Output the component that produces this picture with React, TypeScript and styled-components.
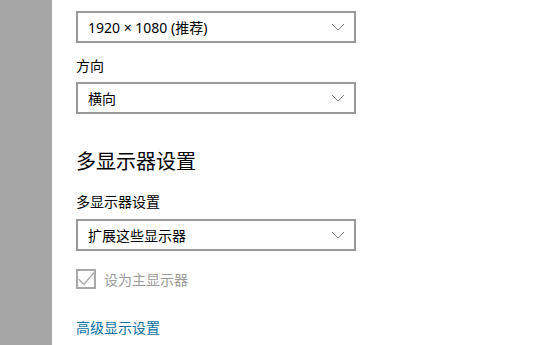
import React from "react";
import styled, { createGlobalStyle } from "styled-components";

const GlobalStyle = createGlobalStyle`
  html, body {
    margin: 0;
    padding: 0;
    background: #ffffff;
  }
  body {
    font-family: "Segoe UI", "Noto Sans", "Noto Sans CJK SC", sans-serif;
  }
`;

const Chevron = () => (
  <svg width="14" height="8" viewBox="0 0 14 8" fill="none">
    <path d="M1 1 L7 7 L13 1" stroke="#808080" strokeWidth="1" />
  </svg>
);

const Check = () => (
  <svg width="16" height="16" viewBox="0 0 16 16" fill="none">
    <path d="M0.5 8 L6 13.5 L16 1.5" stroke="#a8a8a8" strokeWidth="1.3" />
  </svg>
);

type DropdownProps = { value: string; top?: number };

const Dropdown = ({ value, top }: DropdownProps) => (
  <Select $top={top}>
    <SelectText>{value}</SelectText>
    <Chevron />
  </Select>
);

const App = () => {
  return (
    <Page>
      <GlobalStyle />
      <Sidebar />
      <Content>
        <Dropdown value="1920 × 1080 (推荐)" />
        <Label $top={13}>方向</Label>
        <Dropdown value="横向" top={6} />
        <Heading>多显示器设置</Heading>
        <Label $top={16}>多显示器设置</Label>
        <Dropdown value="扩展这些显示器" top={7} />
        <CheckRow>
          <Box>
            <Check />
          </Box>
          <CheckText>设为主显示器</CheckText>
        </CheckRow>
        <Link>高级显示设置</Link>
      </Content>
    </Page>
  );
};

export default App;

const Page = styled.div`
  display: flex;
  width: 550px;
  height: 345px;
  overflow: hidden;
  background: #ffffff;
`;

const Sidebar = styled.div`
  width: 52px;
  flex-shrink: 0;
  background: #a5a5a5;
`;

const Content = styled.div`
  display: flex;
  flex-direction: column;
  align-items: flex-start;
  padding: 11px 0 0 24px;
`;

const Select = styled.div<{ $top?: number }>`
  box-sizing: border-box;
  width: 280px;
  height: 32px;
  margin-top: ${({ $top }) => $top ?? 0}px;
  padding: 0 9px 0 10px;
  border: 2px solid #999999;
  display: flex;
  align-items: center;
  justify-content: space-between;
`;

const SelectText = styled.span`
  font-size: 14px;
  color: #000000;
`;

const Label = styled.div<{ $top: number }>`
  margin-top: ${({ $top }) => $top}px;
  font-size: 14px;
  line-height: 20px;
  color: #000000;
`;

const Heading = styled.div`
  margin-top: 34px;
  font-size: 20px;
  line-height: 28px;
  color: #000000;
`;

const CheckRow = styled.div`
  margin-top: 18px;
  display: flex;
  align-items: center;
  gap: 8px;
`;

const Box = styled.div`
  box-sizing: border-box;
  width: 20px;
  height: 20px;
  border: 2px solid #a8a8a8;
  display: flex;
  align-items: center;
  justify-content: center;
`;

const CheckText = styled.span`
  font-size: 14px;
  color: #9a9a9a;
`;

const Link = styled.div`
  margin-top: 29px;
  font-size: 14px;
  line-height: 20px;
  color: #0a6ea3;
`;
